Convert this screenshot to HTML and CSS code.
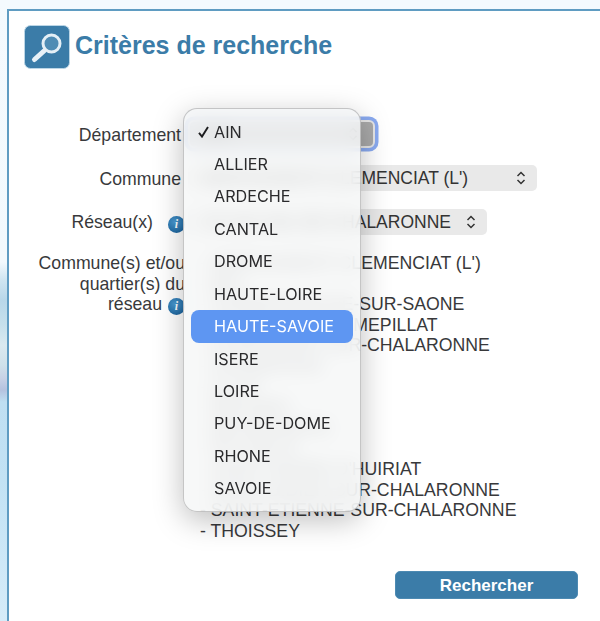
FILE: index.html
```html
<!DOCTYPE html>
<html lang="fr">
<head>
<meta charset="utf-8">
<title>Critères de recherche</title>
<link rel="stylesheet" href="styles.css">
</head>
<body>
<main class="panel">
  <header class="panel-head">
    <svg class="logo" width="46" height="44" viewBox="0 0 46 44" aria-hidden="true">
      <rect x="0.5" y="0.5" width="45" height="43" rx="6" fill="#3b7ca8" stroke="#bcd6e6"/>
      <circle cx="27.5" cy="18.5" r="8.5" fill="#4f8cb4" stroke="#e4eff6" stroke-width="3"/>
      <path d="M20.5 25.5 L10.5 34.5" stroke="#e8f1f7" stroke-width="5" stroke-linecap="round" fill="none"/>
    </svg>
    <h1 class="title">Critères de recherche</h1>
  </header>

  <form class="criteria">
    <label class="field-label field-label--inset">Département</label>
    <div class="field">
      <div class="select select--focus"><span>AIN</span><svg class="updown" width="10" height="14" viewBox="0 0 10 14"><path d="M1.5 5 L5 1.5 L8.5 5 M1.5 9 L5 12.5 L8.5 9" fill="none" stroke="#333" stroke-width="1.5"/></svg></div>
    </div>

    <label class="field-label field-label--inset">Commune</label>
    <div class="field">
      <div class="select select--commune"><span>ABERGEMENT-CLEMENCIAT (L')</span><svg class="updown" width="10" height="14" viewBox="0 0 10 14"><path d="M1.5 5 L5 1.5 L8.5 5 M1.5 9 L5 12.5 L8.5 9" fill="none" stroke="#333" stroke-width="1.5"/></svg></div>
    </div>

    <label class="field-label"><span class="reseau-text">Réseau(x)</span><i class="info">i</i></label>
    <div class="field">
      <div class="select select--reseau"><span>CC DU VAL DE CHALARONNE</span><svg class="updown" width="10" height="14" viewBox="0 0 10 14"><path d="M1.5 5 L5 1.5 L8.5 5 M1.5 9 L5 12.5 L8.5 9" fill="none" stroke="#333" stroke-width="1.5"/></svg></div>
    </div>

    <label class="field-label field-label--multi">Commune(s) et/ou<br>quartier(s) du<br><span class="reseau-short">réseau</span><i class="info">i</i></label>
    <ul class="towns">
      <li>- ABERGEMENT-CLEMENCIAT (L')</li>
      <li>- BEY</li>
      <li>- CORMORANCHE-SUR-SAONE</li>
      <li>- CRUZILLES-LES-MEPILLAT</li>
      <li>- DOMPIERRE-SUR-CHALARONNE</li>
      <li>- GARNERANS</li>
      <li>- ILLIAT</li>
      <li>- MESSIMY</li>
      <li>- MOGNENEINS</li>
      <li>- PEYZIEUX</li>
      <li>- SAINT-ANDRE-D'HUIRIAT</li>
      <li>- SAINT-DIDIER-SUR-CHALARONNE</li>
      <li>- SAINT-ETIENNE-SUR-CHALARONNE</li>
      <li>- THOISSEY</li>
    </ul>

    <div class="actions"><button type="button" class="submit">Rechercher</button></div>
  </form>
</main>

<div class="menu" role="listbox">
  <div class="menu-item"><svg class="check" width="11" height="12" viewBox="0 0 11 12"><path d="M1 6.8 L4 10.6 L10 1" fill="none" stroke="#1d1d1f" stroke-width="1.9"/></svg>AIN</div>
  <div class="menu-item">ALLIER</div>
  <div class="menu-item">ARDECHE</div>
  <div class="menu-item">CANTAL</div>
  <div class="menu-item">DROME</div>
  <div class="menu-item">HAUTE-LOIRE</div>
  <div class="menu-item menu-item--active">HAUTE-SAVOIE</div>
  <div class="menu-item">ISERE</div>
  <div class="menu-item">LOIRE</div>
  <div class="menu-item">PUY-DE-DOME</div>
  <div class="menu-item">RHONE</div>
  <div class="menu-item">SAVOIE</div>
</div>
</body>
</html>
```
FILE: styles.css
```css
* { box-sizing: border-box; }

html, body {
  margin: 0;
  height: 100%;
  overflow: hidden;
}

body {
  padding: 9px 0 0 7px;
  font-family: "Liberation Sans", Arial, sans-serif;
  font-size: 17.7px;
  color: #38393b;
  background: linear-gradient(180deg,
    #f4fafe 0, #f2f9fd 262px, #cfe5f1 280px, #b8d7e9 300px, #c6e0ec 325px,
    #d9e9f0 345px, #cfe1ea 365px, #c8d2e6 378px, #b5c2df 390px, #bfdff2 402px,
    #c2e2f4 480px, #d6ecf9 621px);
}

.panel {
  height: 100%;
  background: #fff;
  border-top: 2px solid #5f9cc2;
  border-left: 2px solid #5f9cc2;
  padding: 14px 0 0 15px;
}

.panel-head {
  display: flex;
  align-items: center;
  gap: 5px;
}

.logo { flex: none; }

.title {
  margin: 0;
  font-size: 25px;
  font-weight: 700;
  color: #3b7ca8;
  position: relative;
  top: -2px;
}

.criteria {
  display: grid;
  grid-template-columns: 176px 1fr;
  column-gap: 3px;
  margin: 43px 0 0 -15px;
}

.field-label {
  text-align: right;
  line-height: 20.6px;
  align-self: center;
}

.field-label--inset {
  padding-right: 4px;
  position: relative;
  top: 1px;
}

.field-label--multi {
  align-self: start;
  margin-top: 9px;
  padding-right: 0;
}

.reseau-text { margin-right: 15px; }
.reseau-short { margin-right: 6px; }

.info {
  display: inline-block;
  width: 17px;
  height: 17px;
  margin-block: -3px;
  border-radius: 50%;
  background: radial-gradient(circle at 40% 35%, #4a9ad2, #1e669f 75%);
  color: #fff;
  font: italic 700 12px/17px "Liberation Serif", serif;
  text-align: center;
  vertical-align: 0;
}

.field {
  display: flex;
  align-items: center;
  height: 44px;
}

.select {
  display: flex;
  align-items: center;
  justify-content: space-between;
  height: 26px;
  padding: 0 11px 0 12px;
  border-radius: 5px;
  background: #e9e9e9;
  color: #333;
  font-size: 17.5px;
}

.select--focus {
  width: 187px;
  height: 28px;
  padding-right: 15px;
  background: #a9a9a9;
  border: 2px solid #e6e6e6;
  box-shadow: 0 0 0 3.5px #8aaaf0;
  border-radius: 6px;
}

.select--commune { width: 349px; }
.select--reseau { width: 299px; padding-left: 16px; }

.updown { flex: none; }

.towns {
  list-style: none;
  margin: 9px 0 0;
  padding: 0 0 0 12px;
  line-height: 20.6px;
  white-space: nowrap;
}

.actions {
  grid-column: 1 / -1;
  display: flex;
  margin: 30px 0 0 386px;
}

.submit {
  width: 183px;
  height: 28px;
  padding: 1px 0 0;
  border: 1px solid #4d8ab2;
  border-radius: 5px;
  background: #3b7ca8;
  color: #fff;
  font: 700 17px "Liberation Sans", Arial, sans-serif;
}

.menu {
  position: absolute;
  left: 183px;
  top: 108px;
  width: 178px;
  height: 404px;
  padding: 6.5px 7px;
  border-radius: 14px;
  border: 1px solid rgba(90, 90, 90, 0.32);
  background: rgba(246, 247, 247, 0.84);
  -webkit-backdrop-filter: blur(9px);
  backdrop-filter: blur(9px);
  box-shadow: 0 8px 30px rgba(0, 0, 0, 0.26);
  font-family: Inter, "Liberation Sans", sans-serif;
  font-size: 16.2px;
  color: #2a2a2c;
}

.menu-item {
  position: relative;
  height: 32.45px;
  line-height: 32.45px;
  padding-left: 23px;
  border-radius: 8px;
}

.menu-item--active {
  background: #5e96f2;
  color: #fff;
}

.check {
  position: absolute;
  left: 7px;
  top: 10px;
}
```
